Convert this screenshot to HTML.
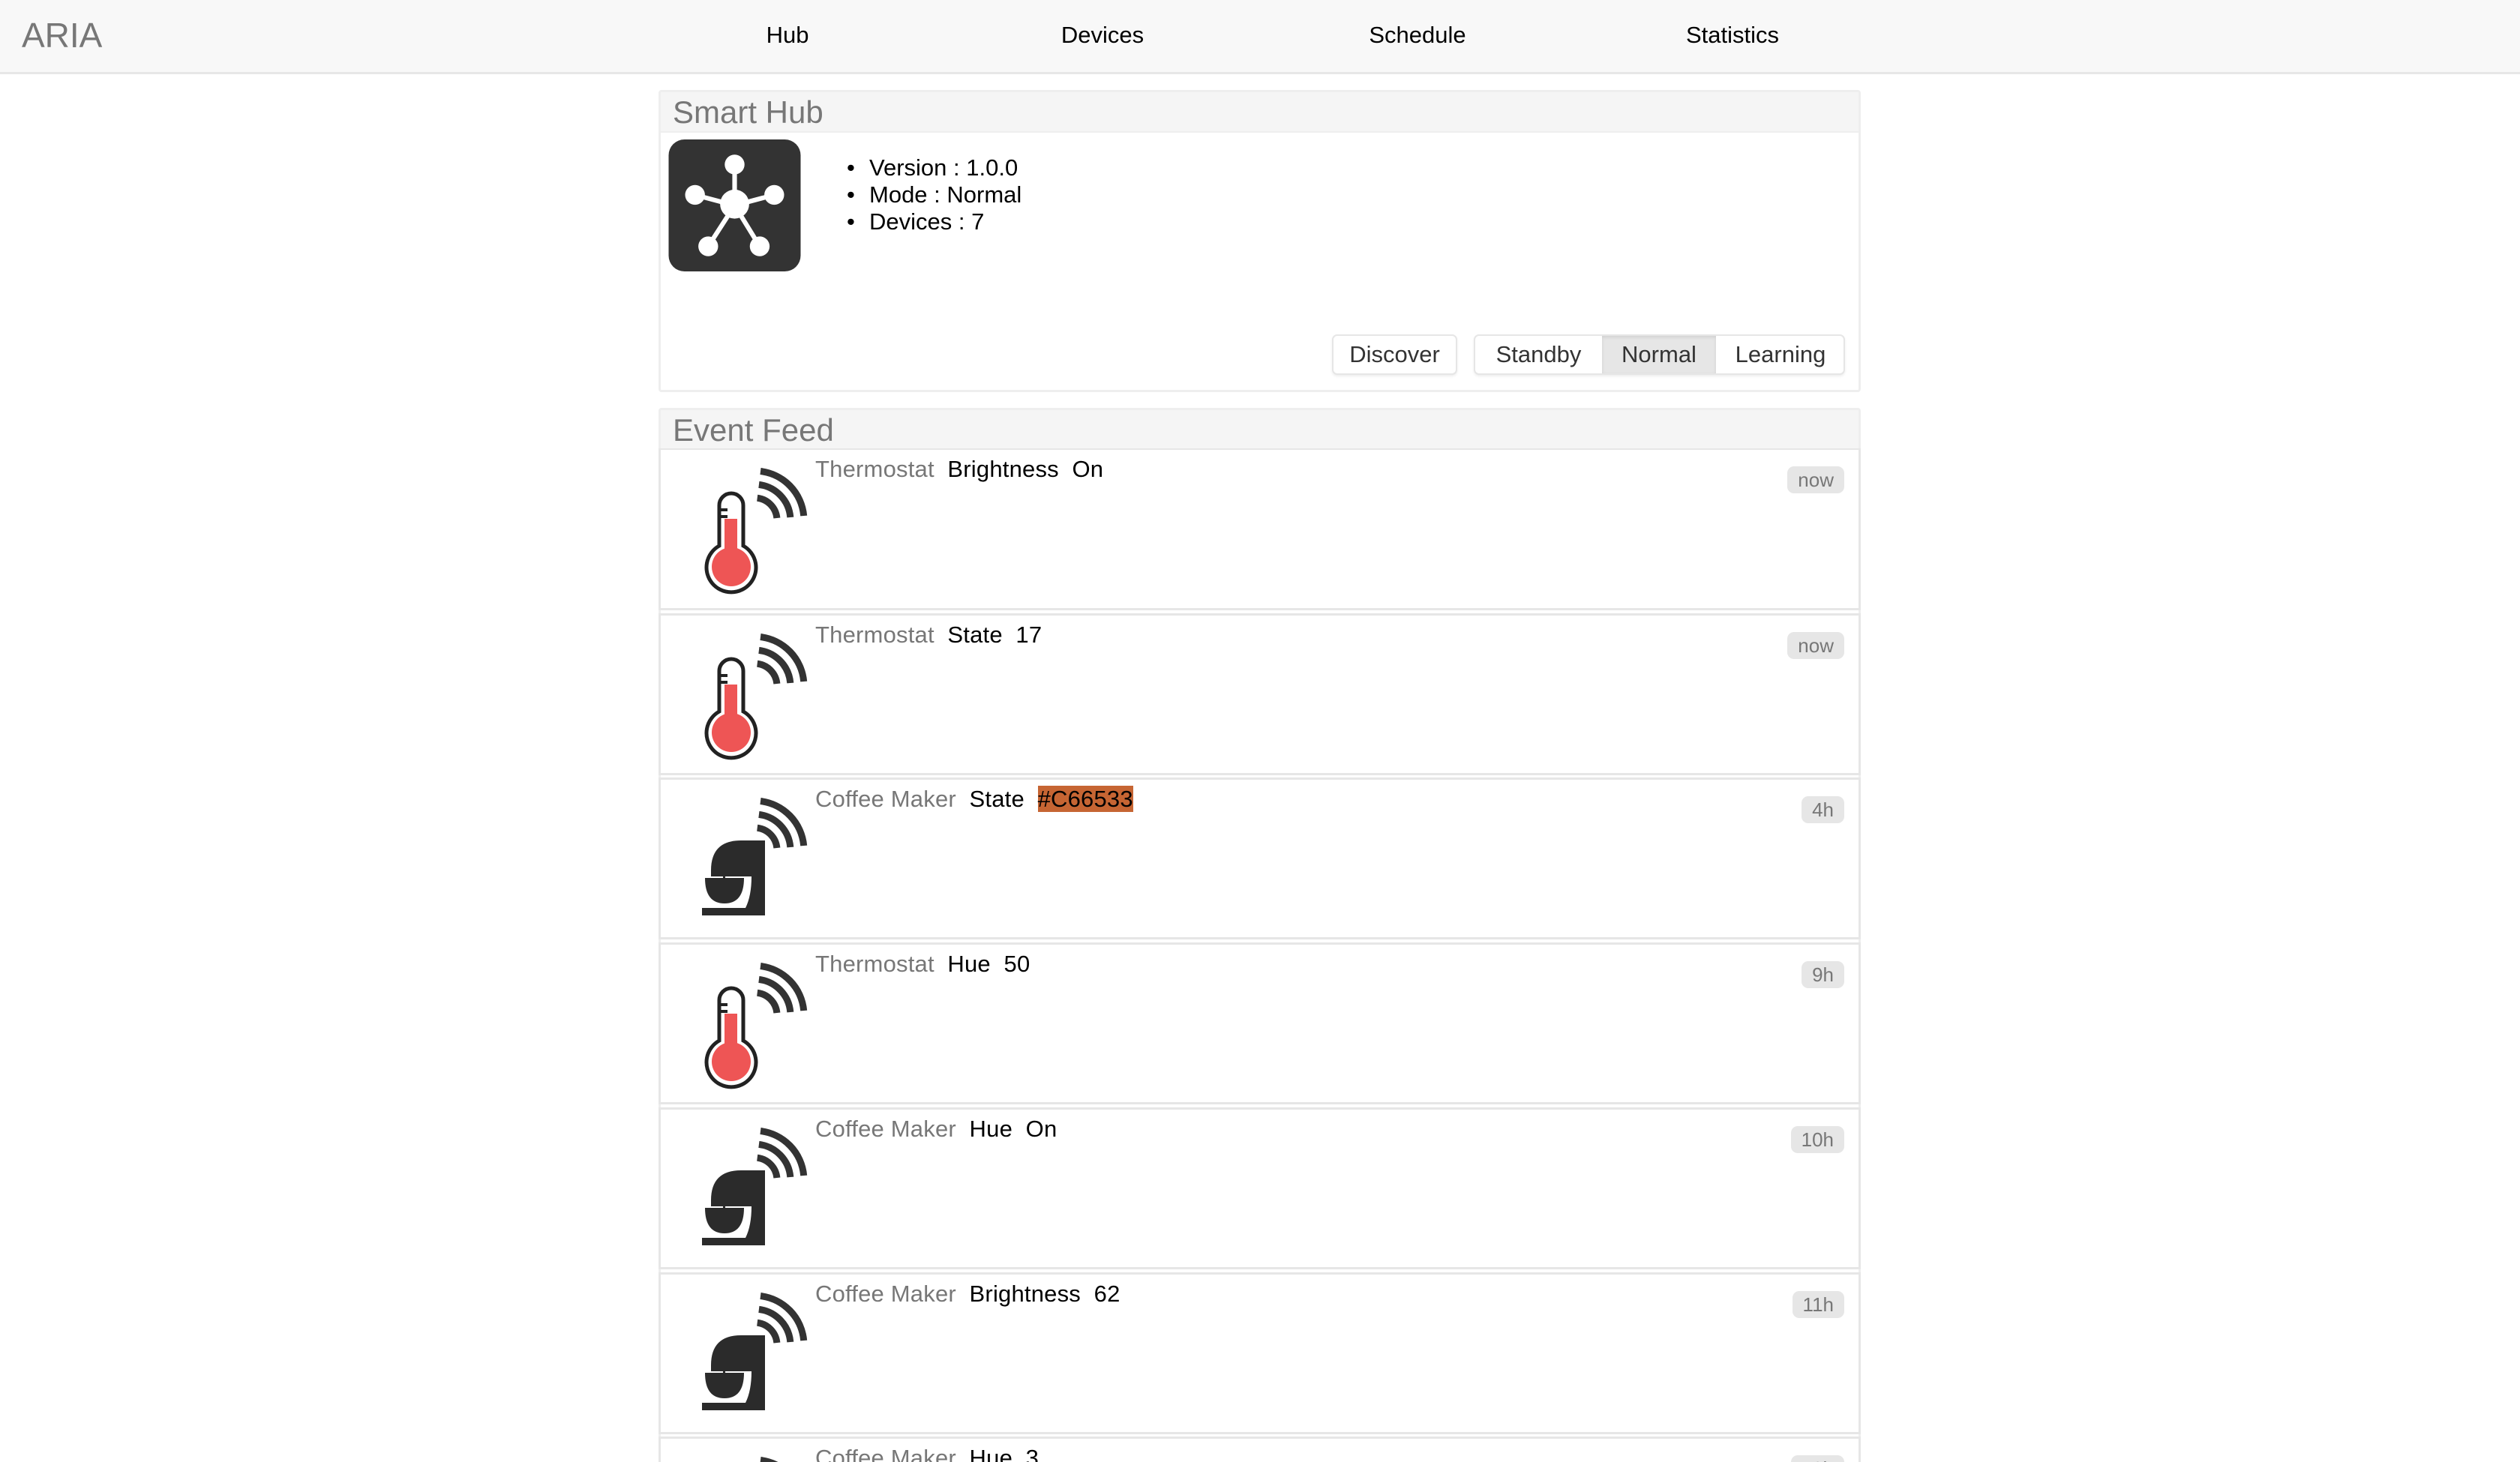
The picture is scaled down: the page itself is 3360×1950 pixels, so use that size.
<!DOCTYPE html>
<html><head><meta charset="utf-8">
<style>
*{box-sizing:border-box;margin:0;padding:0}
html,body{width:3360px;height:1950px;overflow:hidden;background:#fff;font-family:"Liberation Sans",Arial,sans-serif}
#wrap{position:relative;width:3360px;height:1950px;overflow:hidden}
.nav{position:absolute;left:0;top:0;width:3360px;height:99px;background:#f8f8f8;border-bottom:3px solid #e7e7e7}
.brand{position:absolute;left:29px;top:20px;font-size:46px;color:#777}
.nav a{position:absolute;top:29px;font-size:31px;color:#000;transform:translateX(-50%)}
.panel{position:absolute;left:878px;width:1603px;border:3px solid #eee;border-radius:4px;background:#fff}
.ph{background:#f5f5f5;height:54px;font-size:42px;color:#777;padding:0 0 0 16px;line-height:54px;border-bottom:2px solid #eee}
.list{position:absolute;left:1129px;top:206px;font-size:31px;line-height:36px;list-style:none}
.list li:before{content:"•";position:absolute;left:0}
.list li{padding-left:30px}
.btn{position:absolute;top:446px;height:54px;border:2px solid #e6e6e6;border-radius:7px;font-size:31px;color:#333;line-height:50px;box-shadow:0 2px 3px #eee;background:#fff}
.item{position:absolute;left:878px;width:1603px;height:216px;border:3px solid #e6e6e6;border-top:none;background:#fff;overflow:hidden}
.item svg{position:absolute;left:-3px;top:0}
.t{position:absolute;left:206px;top:8px;font-size:31px;white-space:pre;letter-spacing:0.2px}
.g{color:#777}
.badge{position:absolute;top:22px;right:19px;height:36px;padding:0 14px;background:#e6e6e6;border-radius:9px;color:#777;font-size:26px;line-height:36px}
.hl{background:#c66533}
</style></head><body><div id="wrap">
<div class="nav">
<div class="brand">ARIA</div>
<a style="left:1050px">Hub</a>
<a style="left:1470px">Devices</a>
<a style="left:1890px">Schedule</a>
<a style="left:2310px">Statistics</a>
</div>

<div class="panel" style="top:120px;height:403px"><div class="ph">Smart Hub</div></div>
<svg style="position:absolute;left:891px;top:186px" width="177" height="176" viewBox="0 0 100 100">
<rect width="100" height="100" rx="12" fill="#333"/>
<g stroke="#fff" stroke-width="3.5"><line x1="50" y1="50" x2="50" y2="19"/><line x1="50" y1="50" x2="20" y2="42"/><line x1="50" y1="50" x2="80" y2="42"/><line x1="50" y1="50" x2="30" y2="81"/><line x1="50" y1="50" x2="69" y2="81"/></g>
<g fill="#fff"><circle cx="50" cy="49" r="11"/><circle cx="50" cy="19" r="7.5"/><circle cx="20" cy="42" r="7.5"/><circle cx="80" cy="42" r="7.5"/><circle cx="30" cy="81" r="7.5"/><circle cx="69" cy="81" r="7.5"/></g>
</svg>
<ul class="list"><li>Version : 1.0.0</li><li>Mode : Normal</li><li>Devices : 7</li></ul>
<div class="btn" style="left:1776px;width:167px;text-align:center">Discover</div>
<div class="btn" style="left:1965px;width:495px;overflow:hidden">
<span style="position:absolute;left:0;width:169px;text-align:center">Standby</span>
<span style="position:absolute;left:169px;width:152px;text-align:center;background:#e6e6e6;box-shadow:inset 0 2px 4px #d0d0d0">Normal</span>
<span style="position:absolute;left:321px;width:172px;text-align:center">Learning</span>
</div>

<div class="panel" style="top:544px;height:1406px;border-bottom:none"><div class="ph">Event Feed</div></div>

<svg width="0" height="0" style="position:absolute">
<defs>
<g id="wifi" fill="none" stroke="#333" stroke-width="9">
<path d="M136 28.5 A66 66 0 0 1 193.7 88"/><path d="M133.9 46.4 A48 48 0 0 1 175.8 90"/><path d="M131.7 64.2 A30 30 0 0 1 157.9 91"/>
</g>
<g id="thermo">
<path d="M81 74 a16 16 0 0 1 32 0 V128 a33 33 0 1 1 -32 0 Z" fill="#fff" stroke="#222" stroke-width="5"/>
<rect x="88" y="92" width="17" height="50" fill="#ee5555"/>
<circle cx="97" cy="156" r="26" fill="#ee5555"/>
<path d="M83 80 h9 M83 89 h9" stroke="#222" stroke-width="4"/>
</g>
<g id="coffee" fill="#2b2b2b" transform="translate(58 77)">
<path d="M12 44 Q12 4 52 4 H84 V104 H0 V94 H58 Q66 78 66 52 H12 Z"/>
<path d="M4 54 H56 Q56 88 30 88 Q4 88 4 54 Z"/>
<rect x="28" y="44" width="3" height="12"/>
</g>
</defs></svg>

<div class="item" style="top:598px;border-top:2px solid #e6e6e6">
<svg width="220" height="216"><use href="#wifi"/><use href="#thermo"/></svg>
<div class="t"><span class="g">Thermostat</span>  Brightness  On</div><div class="badge">now</div></div>

<div class="item" style="top:818px;border-top:3px solid #e6e6e6">
<svg width="220" height="216"><use href="#wifi"/><use href="#thermo"/></svg>
<div class="t"><span class="g">Thermostat</span>  State  17</div><div class="badge">now</div></div>

<div class="item" style="top:1037px;border-top:3px solid #e6e6e6">
<svg width="220" height="216"><use href="#wifi"/><use href="#coffee"/></svg>
<div class="t"><span class="g">Coffee Maker</span>  State  <span class="hl">#C66533</span></div><div class="badge">4h</div></div>

<div class="item" style="top:1257px;border-top:3px solid #e6e6e6">
<svg width="220" height="216"><use href="#wifi"/><use href="#thermo"/></svg>
<div class="t"><span class="g">Thermostat</span>  Hue  50</div><div class="badge">9h</div></div>

<div class="item" style="top:1477px;border-top:3px solid #e6e6e6">
<svg width="220" height="216"><use href="#wifi"/><use href="#coffee"/></svg>
<div class="t"><span class="g">Coffee Maker</span>  Hue  On</div><div class="badge">10h</div></div>

<div class="item" style="top:1697px;border-top:3px solid #e6e6e6">
<svg width="220" height="216"><use href="#wifi"/><use href="#coffee"/></svg>
<div class="t"><span class="g">Coffee Maker</span>  Brightness  62</div><div class="badge">11h</div></div>

<div class="item" style="top:1916px;height:34px;border-top:3px solid #e6e6e6;border-bottom:none">
<svg width="220" height="34"><use href="#wifi"/></svg>
<div class="t"><span class="g">Coffee Maker</span>  Hue  3</div><div class="badge">12h</div></div>
</div></body></html>
